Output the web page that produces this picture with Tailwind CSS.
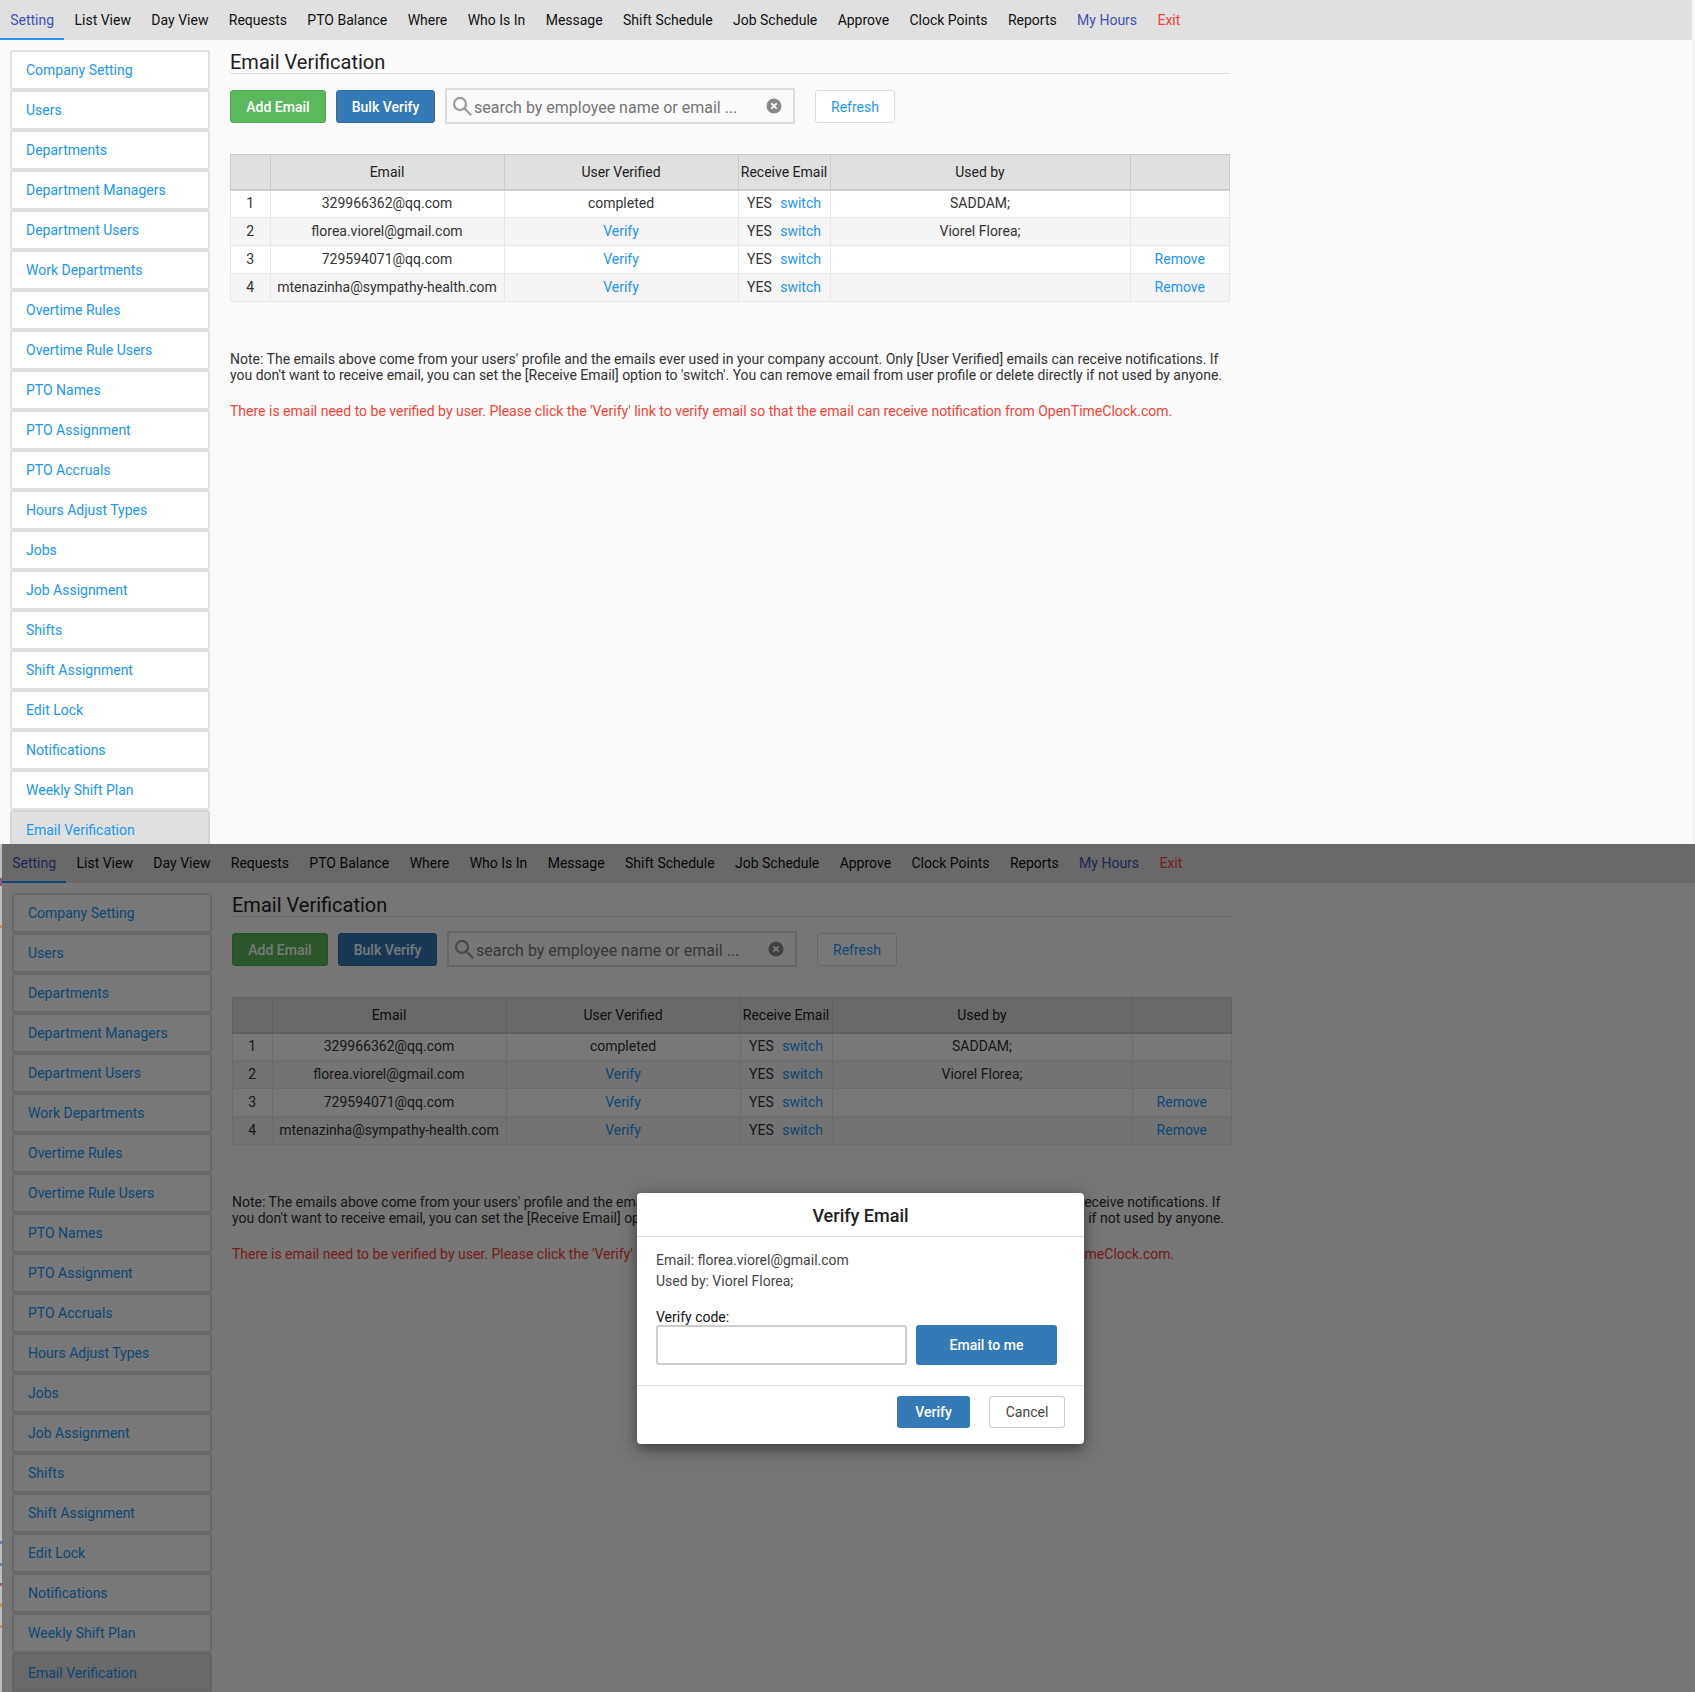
<!DOCTYPE html>
<html lang="en">
<head>
  <meta charset="UTF-8" />
  <title>Email Verification</title>
  <script src="https://cdn.jsdelivr.net/npm/@tailwindcss/browser@4"></script>
</head>
<body class="bg-[#f4f4f4] font-['Roboto',sans-serif] text-[14px] text-[#333] overflow-hidden">

  <!-- page, first capture -->
  <div id="screen" class="mr-[3px] h-[844px] overflow-hidden bg-[#fafafa]">
    <nav class="flex h-10 bg-[#e0e0e0] text-[14px] leading-[40px] text-[#111]">
      <a class="px-[10.2px] h-10 text-[#3f51b5] border-b-2 border-[#2196f3]">Setting</a>
      <a class="px-[10.2px]">List View</a>
      <a class="px-[10.2px]">Day View</a>
      <a class="px-[10.2px]">Requests</a>
      <a class="px-[10.2px]">PTO Balance</a>
      <a class="px-[10.2px]">Where</a>
      <a class="px-[10.2px]">Who Is In</a>
      <a class="px-[10.2px]">Message</a>
      <a class="px-[10.2px]">Shift Schedule</a>
      <a class="px-[10.2px]">Job Schedule</a>
      <a class="px-[10.2px]">Approve</a>
      <a class="px-[10.2px]">Clock Points</a>
      <a class="px-[10.2px]">Reports</a>
      <a class="px-[10.2px] text-[#3f51b5]">My Hours</a>
      <a class="px-[10.2px] text-[#f44336]">Exit</a>
    </nav>

    <div class="flex pt-[10px] pl-[10px]">
      <!-- settings menu -->
      <ul class="w-[200px] shrink-0 text-[#2196f3]">
        <li class="h-10 pl-[14px] leading-9 bg-white border-2 border-[#e0e0e0] rounded-[3px]">Company Setting</li>
        <li class="h-10 pl-[14px] leading-9 bg-white border-2 border-[#e0e0e0] rounded-[3px]">Users</li>
        <li class="h-10 pl-[14px] leading-9 bg-white border-2 border-[#e0e0e0] rounded-[3px]">Departments</li>
        <li class="h-10 pl-[14px] leading-9 bg-white border-2 border-[#e0e0e0] rounded-[3px]">Department Managers</li>
        <li class="h-10 pl-[14px] leading-9 bg-white border-2 border-[#e0e0e0] rounded-[3px]">Department Users</li>
        <li class="h-10 pl-[14px] leading-9 bg-white border-2 border-[#e0e0e0] rounded-[3px]">Work Departments</li>
        <li class="h-10 pl-[14px] leading-9 bg-white border-2 border-[#e0e0e0] rounded-[3px]">Overtime Rules</li>
        <li class="h-10 pl-[14px] leading-9 bg-white border-2 border-[#e0e0e0] rounded-[3px]">Overtime Rule Users</li>
        <li class="h-10 pl-[14px] leading-9 bg-white border-2 border-[#e0e0e0] rounded-[3px]">PTO Names</li>
        <li class="h-10 pl-[14px] leading-9 bg-white border-2 border-[#e0e0e0] rounded-[3px]">PTO Assignment</li>
        <li class="h-10 pl-[14px] leading-9 bg-white border-2 border-[#e0e0e0] rounded-[3px]">PTO Accruals</li>
        <li class="h-10 pl-[14px] leading-9 bg-white border-2 border-[#e0e0e0] rounded-[3px]">Hours Adjust Types</li>
        <li class="h-10 pl-[14px] leading-9 bg-white border-2 border-[#e0e0e0] rounded-[3px]">Jobs</li>
        <li class="h-10 pl-[14px] leading-9 bg-white border-2 border-[#e0e0e0] rounded-[3px]">Job Assignment</li>
        <li class="h-10 pl-[14px] leading-9 bg-white border-2 border-[#e0e0e0] rounded-[3px]">Shifts</li>
        <li class="h-10 pl-[14px] leading-9 bg-white border-2 border-[#e0e0e0] rounded-[3px]">Shift Assignment</li>
        <li class="h-10 pl-[14px] leading-9 bg-white border-2 border-[#e0e0e0] rounded-[3px]">Edit Lock</li>
        <li class="h-10 pl-[14px] leading-9 bg-white border-2 border-[#e0e0e0] rounded-[3px]">Notifications</li>
        <li class="h-10 pl-[14px] leading-9 bg-white border-2 border-[#e0e0e0] rounded-[3px]">Weekly Shift Plan</li>
        <li class="h-10 pl-[14px] leading-9 bg-[#e0e0e0] border-2 border-[#d4d4d4] rounded-[3px]">Email Verification</li>
      </ul>

      <main class="w-[1000px] ml-5">
        <h2 class="h-[23px] text-[20px] leading-[24px] text-[#212121] border-b border-[#e0e0e0] box-content">Email Verification</h2>

        <div class="flex items-center h-9 mt-[14px]">
          <button class="w-24 h-[33px] pt-[2px] bg-[#5cb85c] text-white font-medium rounded-[3px] border border-[#4cae4c]">Add Email</button>
          <button class="w-[99px] h-[33px] pt-[2px] ml-[10px] bg-[#337ab7] text-white font-medium rounded-[3px] border border-[#2e6da4]">Bulk Verify</button>
          <div class="flex items-center w-[350px] h-9 ml-[10px] pl-[5px] pr-[11px] bg-[#fafafa] border-2 border-[#ddd] text-[16px] text-[#757575]">
            <svg class="w-5 h-5 shrink-0" viewBox="0 0 20 20" fill="none" stroke="#9e9e9e" stroke-width="2.4"><circle cx="8" cy="8" r="6"/><path d="M12.5 12.5 L18.5 18.5" stroke-linecap="round"/></svg>
            <span class="ml-[2px] pt-1 flex-1">search by employee name or email ...</span>
            <svg class="w-4 h-4 shrink-0" viewBox="0 0 16 16"><circle cx="8" cy="8" r="7.5" fill="#8a8a8a"/><path d="M5.3 5.3 L10.7 10.7 M10.7 5.3 L5.3 10.7" stroke="#fff" stroke-width="1.8"/></svg>
          </div>
          <button class="w-[80px] h-[33px] pt-[2px] ml-5 bg-white text-[#2196f3] rounded-[3px] border border-[#ddd]">Refresh</button>
        </div>

        <table class="w-[999px] mt-[30px] table-fixed border-collapse text-center border border-[#ccc]">
          <colgroup><col class="w-[39.5px]" /><col class="w-[234px]" /><col class="w-[234px]" /><col class="w-[92px]" /><col class="w-[300px]" /><col class="w-[99.5px]" /></colgroup>
          <thead>
            <tr class="h-[35px] bg-[#e0e0e0] text-[#222]">
              <th class="border-x border-b-2 border-[#ccc] pt-[2px] font-normal"></th>
              <th class="border-x border-b-2 border-[#ccc] pt-[2px] font-normal">Email</th>
              <th class="border-x border-b-2 border-[#ccc] pt-[2px] font-normal">User Verified</th>
              <th class="border-x border-b-2 border-[#ccc] pt-[2px] font-normal whitespace-nowrap">Receive Email</th>
              <th class="border-x border-b-2 border-[#ccc] pt-[2px] font-normal">Used by</th>
              <th class="border-x border-b-2 border-[#ccc] pt-[2px] font-normal"></th>
            </tr>
          </thead>
          <tbody>
            <tr class="h-7 bg-white">
              <td class="border border-[#e8e8e8]">1</td>
              <td class="border border-[#e8e8e8]">329966362@qq.com</td>
              <td class="border border-[#e8e8e8]">completed</td>
              <td class="border border-[#e8e8e8]">YES <a class="ml-[5px] text-[#2196f3]">switch</a></td>
              <td class="border border-[#e8e8e8]">SADDAM;</td>
              <td class="border border-[#e8e8e8]"></td>
            </tr>
            <tr class="h-7 bg-[#f5f5f5]">
              <td class="border border-[#e8e8e8]">2</td>
              <td class="border border-[#e8e8e8]">florea.viorel@gmail.com</td>
              <td class="border border-[#e8e8e8] text-[#2196f3]">Verify</td>
              <td class="border border-[#e8e8e8]">YES <a class="ml-[5px] text-[#2196f3]">switch</a></td>
              <td class="border border-[#e8e8e8]">Viorel Florea;</td>
              <td class="border border-[#e8e8e8]"></td>
            </tr>
            <tr class="h-7 bg-white">
              <td class="border border-[#e8e8e8]">3</td>
              <td class="border border-[#e8e8e8]">729594071@qq.com</td>
              <td class="border border-[#e8e8e8] text-[#2196f3]">Verify</td>
              <td class="border border-[#e8e8e8]">YES <a class="ml-[5px] text-[#2196f3]">switch</a></td>
              <td class="border border-[#e8e8e8]"></td>
              <td class="border border-[#e8e8e8] text-[#2196f3]">Remove</td>
            </tr>
            <tr class="h-7 bg-[#f5f5f5]">
              <td class="border border-[#e8e8e8]">4</td>
              <td class="border border-[#e8e8e8]">mtenazinha@sympathy-health.com</td>
              <td class="border border-[#e8e8e8] text-[#2196f3]">Verify</td>
              <td class="border border-[#e8e8e8]">YES <a class="ml-[5px] text-[#2196f3]">switch</a></td>
              <td class="border border-[#e8e8e8]"></td>
              <td class="border border-[#e8e8e8] text-[#2196f3]">Remove</td>
            </tr>
          </tbody>
        </table>

        <p class="mt-[49px] leading-4">Note: The emails above come from your users' profile and the emails ever used in your company account. Only [User Verified] emails can receive notifications. If you don't want to receive email, you can set the [Receive Email] option to 'switch'. You can remove email from user profile or delete directly if not used by anyone.</p>
        <p class="mt-[20px] leading-4 text-[#f44336]">There is email need to be verified by user. Please click the 'Verify' link to verify email so that the email can receive notification from OpenTimeClock.com.</p>
      </main>
    </div>
  </div>

  <!-- same page again, dimmed behind the dialog -->
  <div class="relative h-[848px] overflow-hidden bg-[#bdbdbd]">
    <!-- bits of the page underneath showing in the 2px gap on the left -->
    <span class="absolute left-0 top-[34px] w-[2px] h-2 bg-[#8a5a8a]"></span>
    <span class="absolute left-0 top-[81px] w-[2px] h-[3px] bg-[#c8914f]"></span>
    <span class="absolute left-0 top-[697px] w-[2px] h-[3px] bg-[#5f7fc0]"></span>
    <span class="absolute left-0 top-[719px] w-[2px] h-[3px] bg-[#5f7fc0]"></span>
    <span class="absolute left-0 top-[739px] w-[2px] h-[3px] bg-[#a0606a]"></span>
    <span class="absolute left-0 top-[759px] w-[2px] h-1 bg-[#c8914f]"></span>
    <span class="absolute left-0 top-[781px] w-[2px] h-[3px] bg-[#c8914f]"></span>

    <div id="screenCopy" class="ml-[2px] -mt-px h-[849px] overflow-hidden bg-[#fafafa]"></div>
    <div class="absolute inset-0 left-[2px] bg-black/[.53]"></div>

    <div class="absolute left-[637px] top-[349px] w-[447px] h-[251px] bg-white rounded-[4px] shadow-[0_5px_15px_rgba(0,0,0,0.5)]">
      <div class="h-11 text-center text-[18px] leading-[45px] text-[#212121] font-medium border-b border-[#e0e0e0]">Verify Email</div>
      <div class="h-[149px] pl-[19px] pr-5 pt-[13px] border-b border-[#e0e0e0]">
        <div class="leading-[21px] text-[#444]">Email: florea.viorel@gmail.com</div>
        <div class="leading-[21px] text-[#444]">Used by: Viorel Florea;</div>
        <div class="mt-[17px] leading-4 text-[#111]">Verify code:</div>
        <div class="flex">
          <input type="text" class="w-[251px] h-10 bg-white border-2 border-[#ccc] rounded-[3px]" />
          <button class="w-[141px] h-10 ml-[9px] bg-[#337ab7] text-white font-medium rounded-[3px]">Email to me</button>
        </div>
      </div>
      <div class="flex justify-end pt-[10px] pr-[19px]">
        <button class="w-[73px] h-8 bg-[#337ab7] text-white font-medium rounded-[3px]">Verify</button>
        <button class="w-[76px] h-8 ml-[19px] bg-white text-[#444] rounded-[3px] border border-[#ccc]">Cancel</button>
      </div>
    </div>
  </div>

  <script>
    document.getElementById("screenCopy").innerHTML = document.getElementById("screen").innerHTML;
  </script>
</body>
</html>
